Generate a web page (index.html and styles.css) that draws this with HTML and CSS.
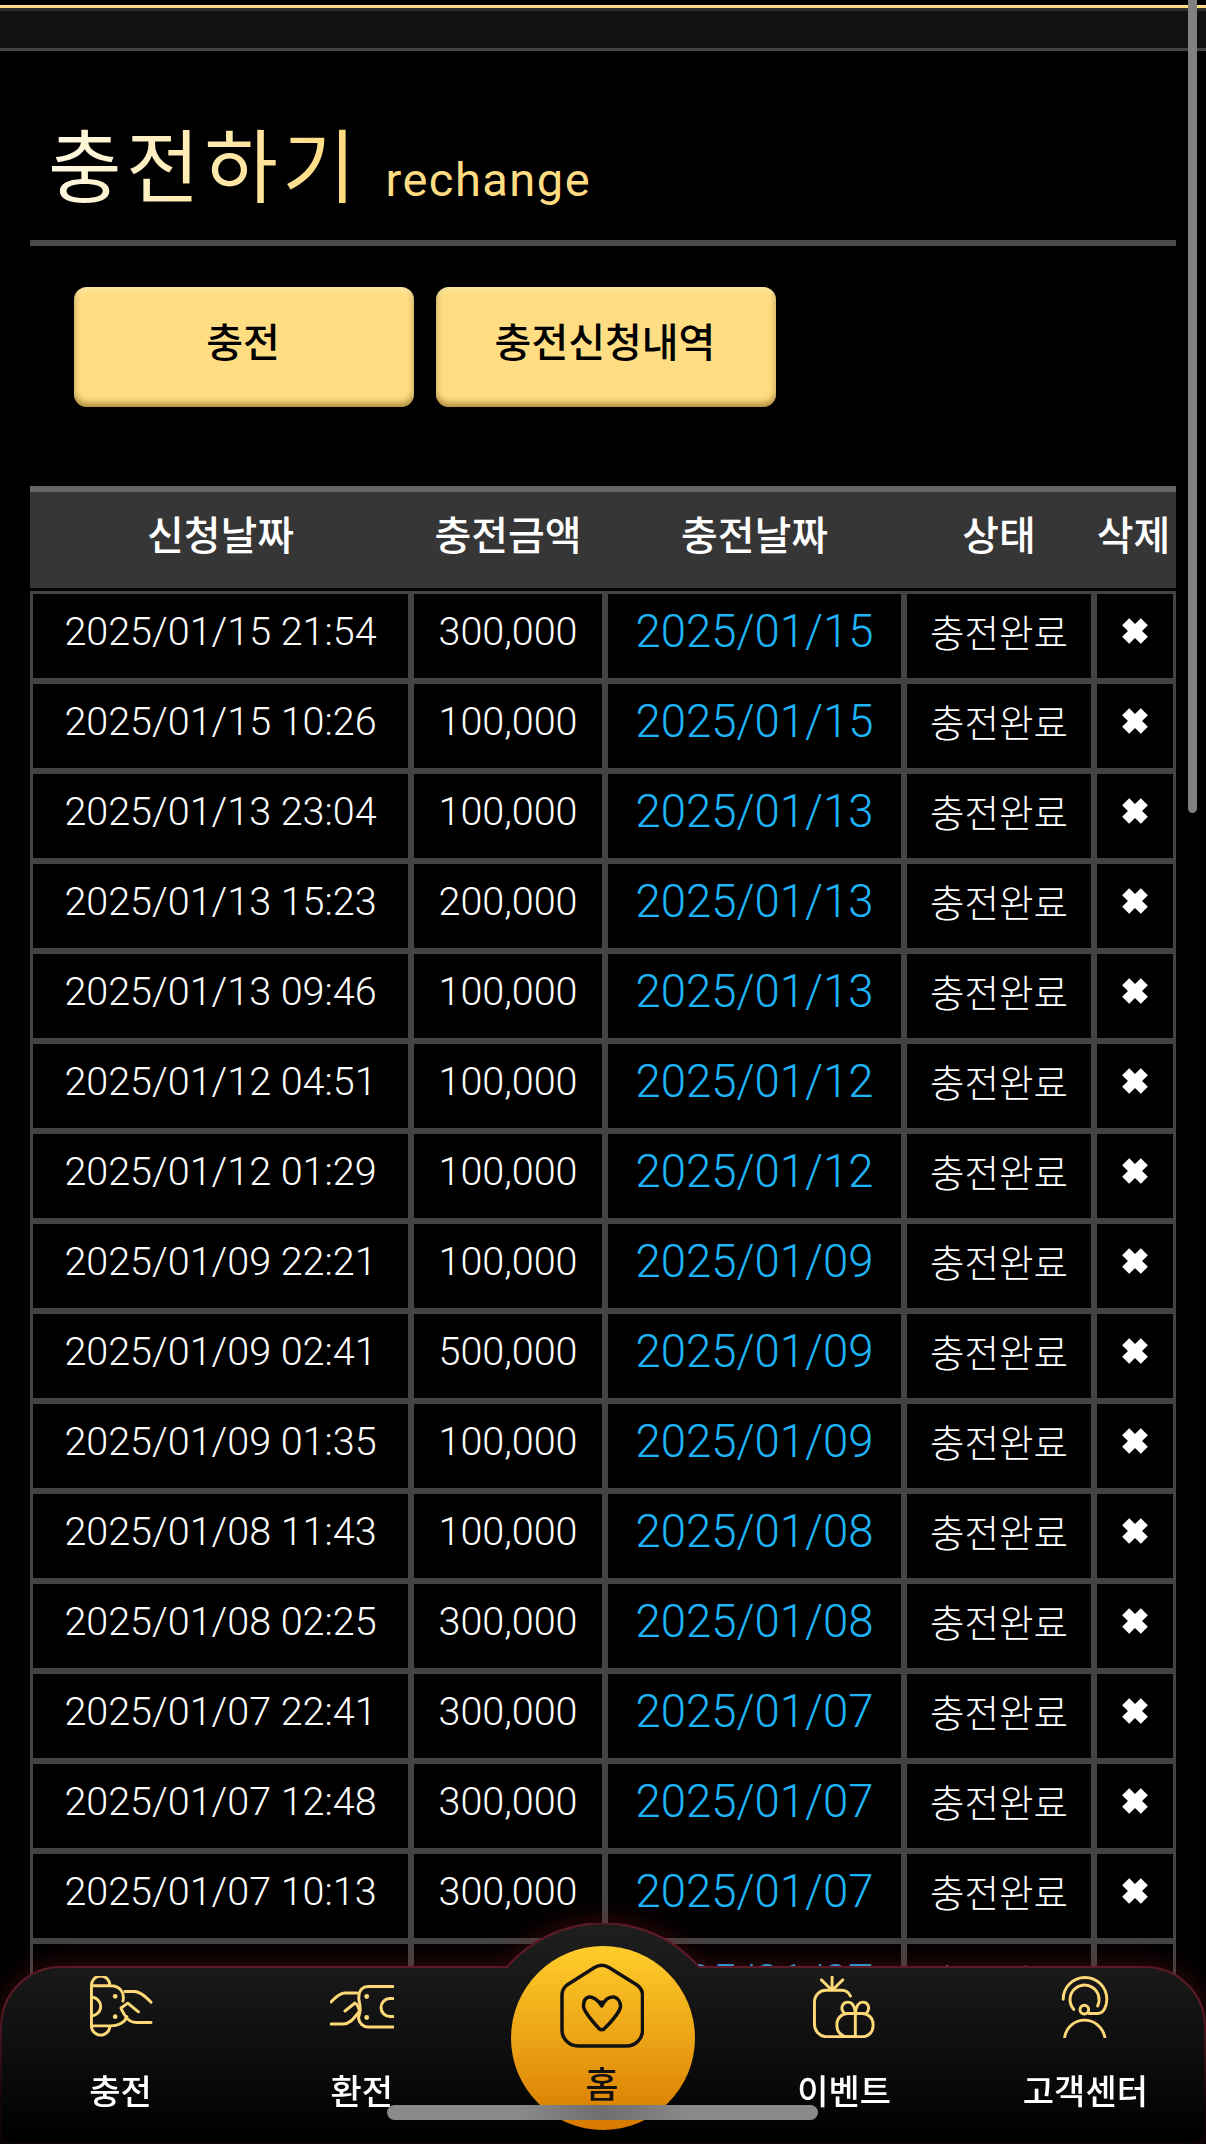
FILE: index.html
```html
<!DOCTYPE html>
<html lang="ko">
  <head>
    <meta charset="UTF-8" />
    <meta name="viewport" content="width=device-width, initial-scale=1.0" />
    <title>충전하기</title>
    <link rel="stylesheet" href="styles.css">
  </head>
  <body>
    <div class="top-bar"></div>

    <main class="content">
      <div class="page-title">
        <h1>충전하기</h1>
        <span class="page-title-en">rechange</span>
      </div>

      <div class="tabs">
        <a class="tab-button">충전</a>
        <a class="tab-button">충전신청내역</a>
      </div>

      <div class="history">
        <div class="history-head">
          <div>신청날짜</div>
          <div>충전금액</div>
          <div>충전날짜</div>
          <div>상태</div>
          <div>삭제</div>
        </div>

        <div class="history-row">
          <div class="cell">2025/01/15 21:54</div>
          <div class="cell">300,000</div>
          <div class="cell cell-date">2025/01/15</div>
          <div class="cell cell-status">충전완료</div>
          <div class="cell"><svg class="icon-x" viewBox="0 0 24 24"><path d="M5 5l14 14M19 5L5 19" /></svg></div>
        </div>
        <div class="history-row">
          <div class="cell">2025/01/15 10:26</div>
          <div class="cell">100,000</div>
          <div class="cell cell-date">2025/01/15</div>
          <div class="cell cell-status">충전완료</div>
          <div class="cell"><svg class="icon-x" viewBox="0 0 24 24"><path d="M5 5l14 14M19 5L5 19" /></svg></div>
        </div>
        <div class="history-row">
          <div class="cell">2025/01/13 23:04</div>
          <div class="cell">100,000</div>
          <div class="cell cell-date">2025/01/13</div>
          <div class="cell cell-status">충전완료</div>
          <div class="cell"><svg class="icon-x" viewBox="0 0 24 24"><path d="M5 5l14 14M19 5L5 19" /></svg></div>
        </div>
        <div class="history-row">
          <div class="cell">2025/01/13 15:23</div>
          <div class="cell">200,000</div>
          <div class="cell cell-date">2025/01/13</div>
          <div class="cell cell-status">충전완료</div>
          <div class="cell"><svg class="icon-x" viewBox="0 0 24 24"><path d="M5 5l14 14M19 5L5 19" /></svg></div>
        </div>
        <div class="history-row">
          <div class="cell">2025/01/13 09:46</div>
          <div class="cell">100,000</div>
          <div class="cell cell-date">2025/01/13</div>
          <div class="cell cell-status">충전완료</div>
          <div class="cell"><svg class="icon-x" viewBox="0 0 24 24"><path d="M5 5l14 14M19 5L5 19" /></svg></div>
        </div>
        <div class="history-row">
          <div class="cell">2025/01/12 04:51</div>
          <div class="cell">100,000</div>
          <div class="cell cell-date">2025/01/12</div>
          <div class="cell cell-status">충전완료</div>
          <div class="cell"><svg class="icon-x" viewBox="0 0 24 24"><path d="M5 5l14 14M19 5L5 19" /></svg></div>
        </div>
        <div class="history-row">
          <div class="cell">2025/01/12 01:29</div>
          <div class="cell">100,000</div>
          <div class="cell cell-date">2025/01/12</div>
          <div class="cell cell-status">충전완료</div>
          <div class="cell"><svg class="icon-x" viewBox="0 0 24 24"><path d="M5 5l14 14M19 5L5 19" /></svg></div>
        </div>
        <div class="history-row">
          <div class="cell">2025/01/09 22:21</div>
          <div class="cell">100,000</div>
          <div class="cell cell-date">2025/01/09</div>
          <div class="cell cell-status">충전완료</div>
          <div class="cell"><svg class="icon-x" viewBox="0 0 24 24"><path d="M5 5l14 14M19 5L5 19" /></svg></div>
        </div>
        <div class="history-row">
          <div class="cell">2025/01/09 02:41</div>
          <div class="cell">500,000</div>
          <div class="cell cell-date">2025/01/09</div>
          <div class="cell cell-status">충전완료</div>
          <div class="cell"><svg class="icon-x" viewBox="0 0 24 24"><path d="M5 5l14 14M19 5L5 19" /></svg></div>
        </div>
        <div class="history-row">
          <div class="cell">2025/01/09 01:35</div>
          <div class="cell">100,000</div>
          <div class="cell cell-date">2025/01/09</div>
          <div class="cell cell-status">충전완료</div>
          <div class="cell"><svg class="icon-x" viewBox="0 0 24 24"><path d="M5 5l14 14M19 5L5 19" /></svg></div>
        </div>
        <div class="history-row">
          <div class="cell">2025/01/08 11:43</div>
          <div class="cell">100,000</div>
          <div class="cell cell-date">2025/01/08</div>
          <div class="cell cell-status">충전완료</div>
          <div class="cell"><svg class="icon-x" viewBox="0 0 24 24"><path d="M5 5l14 14M19 5L5 19" /></svg></div>
        </div>
        <div class="history-row">
          <div class="cell">2025/01/08 02:25</div>
          <div class="cell">300,000</div>
          <div class="cell cell-date">2025/01/08</div>
          <div class="cell cell-status">충전완료</div>
          <div class="cell"><svg class="icon-x" viewBox="0 0 24 24"><path d="M5 5l14 14M19 5L5 19" /></svg></div>
        </div>
        <div class="history-row">
          <div class="cell">2025/01/07 22:41</div>
          <div class="cell">300,000</div>
          <div class="cell cell-date">2025/01/07</div>
          <div class="cell cell-status">충전완료</div>
          <div class="cell"><svg class="icon-x" viewBox="0 0 24 24"><path d="M5 5l14 14M19 5L5 19" /></svg></div>
        </div>
        <div class="history-row">
          <div class="cell">2025/01/07 12:48</div>
          <div class="cell">300,000</div>
          <div class="cell cell-date">2025/01/07</div>
          <div class="cell cell-status">충전완료</div>
          <div class="cell"><svg class="icon-x" viewBox="0 0 24 24"><path d="M5 5l14 14M19 5L5 19" /></svg></div>
        </div>
        <div class="history-row">
          <div class="cell">2025/01/07 10:13</div>
          <div class="cell">300,000</div>
          <div class="cell cell-date">2025/01/07</div>
          <div class="cell cell-status">충전완료</div>
          <div class="cell"><svg class="icon-x" viewBox="0 0 24 24"><path d="M5 5l14 14M19 5L5 19" /></svg></div>
        </div>
        <div class="history-row">
          <div class="cell">2025/01/07 09:55</div>
          <div class="cell">100,000</div>
          <div class="cell cell-date">2025/01/07</div>
          <div class="cell cell-status">충전완료</div>
          <div class="cell"><svg class="icon-x" viewBox="0 0 24 24"><path d="M5 5l14 14M19 5L5 19" /></svg></div>
        </div>
      </div>
    </main>

    <nav class="tabbar">
      <svg class="tabbar-shape" viewBox="0 0 1206 221">
        <defs>
          <linearGradient id="tabbar-fill" x1="0" y1="0" x2="0" y2="1">
            <stop offset="0" stop-color="#1f1f1f" />
            <stop offset="0.25" stop-color="#181818" />
            <stop offset="1" stop-color="#000" />
          </linearGradient>
          <linearGradient id="tabbar-line" x1="0" y1="0" x2="0" y2="1">
            <stop offset="0" stop-color="#5c1a26" />
            <stop offset="0.35" stop-color="#5c1a26" />
            <stop offset="0.8" stop-color="#5c1a26" stop-opacity="0" />
          </linearGradient>
        </defs>
        <path d="M1 209V104A60 60 0 0 1 61 44H507A127 127 0 0 1 699 44H1145A60 60 0 0 1 1205 104V209A12 12 0 0 1 1193 220H13A12 12 0 0 1 1 209Z" />
      </svg>

      <a class="tabbar-item">
        <svg class="tabbar-icon" width="64" height="64" viewBox="0 0 64 64">
          <path d="M1.5 10V9.5a9.5 9.5 0 0 1 19 0V10M1.5 51.5a9.5 9.5 0 0 0 19 0M1.5 10v41.5M1.5 10H21C31 10 36 17 34 26M1.5 51.5H21C29 51.5 36 48 38 42" />
          <path d="M1.5 22A9.5 9.5 0 0 1 1.5 41" />
          <path d="M36 16H46C52 16 58 22 63 27M63 48H48C43 48 39 45 37 42C35 39 33 36 32 33L39 28L50 37" />
          <circle class="dot" cx="26" cy="21" r="2.4" />
          <circle class="dot" cx="26" cy="42" r="2.4" />
        </svg>
        <span>충전</span>
      </a>

      <a class="tabbar-item">
        <svg class="tabbar-icon" width="64" height="44" viewBox="0 0 64 44">
          <path d="M63 1.5H38C33 1.5 29 5 29 11C28 14 30 18 30 22C31 26 29 29 28.5 33C29 38 33 42 38 42H63" />
          <path d="M63 13.500H60A9 9 0 0 0 60 31.500H63" />
          <path d="M1 17C5 13 9 8 15 8H27M1 39H13C20 39 24 33 29 27C30 24 27 19 25 18L15 26" />
          <circle class="dot" cx="36.700" cy="11.500" r="2.400" />
          <circle class="dot" cx="36.700" cy="32.500" r="2.400" />
        </svg>
        <span>환전</span>
      </a>

      <a class="tabbar-item tabbar-home">
        <div class="home-circle">
          <svg class="home-icon" width="84" height="85" viewBox="0 0 84 85">
            <path d="M34.500 4.500Q41.700 0 49 4.500L77 22Q82.500 26 82.500 32V66A16 16 0 0 1 66.500 83H18A16 16 0 0 1 2 67V32Q2 26 7 22Z" />
            <path d="M41.700 43C38 36 32 33.500 29 34C25 35 23.500 39 23.500 43C23.500 49 36 62 38 64.500C40 67.500 43.500 67.500 45.500 64.500C48 62 60.500 49 60.500 43C60.500 39 58 35 54 34C50 33.500 45 36 41.700 43V39" />
          </svg>
          <span>홈</span>
        </div>
      </a>

      <a class="tabbar-item">
        <svg class="tabbar-icon" width="64" height="64" viewBox="0 0 64 64">
          <path d="M19.700 1V14M8.700 4L18.700 14M30.700 4L20.700 14" />
          <path d="M38.700 20.700C37 17 34 14.700 29.700 14.700H13A12 12 0 0 0 1.500 26.500V50A13 13 0 0 0 13 62.700H45" />
          <rect x="24.700" y="38.700" width="37.300" height="24" rx="11" />
          <path d="M43.700 38.700V62.700" />
          <path d="M32.500 38.500C27 33 31 27 36 27C40 27 43 31 43.700 38.500M55 38.500C60 33 56.500 27 51.500 27C47.500 27 44.500 31 43.700 38.500" />
        </svg>
        <span>이벤트</span>
      </a>

      <a class="tabbar-item">
        <svg class="tabbar-icon" width="48" height="64" viewBox="0 0 48 64">
          <path d="M1.500 24A22.500 22.500 0 0 1 46.500 24C46.500 32 43 38.700 37 38.700H28" />
          <path d="M12.500 34.500A15 15 0 1 1 37 31" />
          <circle cx="23.300" cy="34.700" r="4.500" />
          <path d="M3 63C5 52 14 45.500 23.500 45.500C33 45.500 42 52 44.500 63" />
        </svg>
        <span>고객센터</span>
      </a>
    </nav>

    <div class="scroll-thumb-y"></div>
    <div class="scroll-thumb-x"></div>
  </body>
</html>
```

FILE: styles.css
```css
* {
  box-sizing: border-box;
}
html,
body {
  margin: 0;
  height: 2144px;
  overflow: hidden;
  background: #000;
}
body {
  font-family: Roboto, "Noto Sans CJK KR", sans-serif;
  color: #fff;
}

/* top strip */
.top-bar {
  margin-top: 5px;
  height: 46px;
  background: #111;
  border-top: 3px solid #ffdc82;
  border-bottom: 3px solid #444;
  box-shadow: inset 0 3px 0 #2c2c2c;
}

.content {
  padding: 0 30px;
}

/* title */
.page-title {
  display: flex;
  align-items: baseline;
  gap: 25px;
  height: 195px;
  padding: 55px 0 0 18px;
  border-bottom: 6px solid #4a4a4a;
}
.page-title h1 {
  margin: 0;
  font-size: 80px;
  font-weight: 400;
  letter-spacing: 4.5px;
  line-height: 110px;
  font-family: "Noto Sans CJK KR", sans-serif;
  background: linear-gradient(100deg, #fffbe8, #ffd877);
  -webkit-background-clip: text;
  background-clip: text;
  color: transparent;
}
.page-title-en {
  font-size: 47px;
  color: #ffdc82;
  letter-spacing: 1.5px;
}

/* buttons */
.tabs {
  display: flex;
  gap: 22px;
  padding-left: 44px;
  margin-top: 41px;
}
.tab-button {
  display: flex;
  align-items: center;
  justify-content: center;
  width: 340px;
  height: 120px;
  padding: 0 2px 14px 0;
  border-radius: 13px;
  background: #ffdd82;
  color: #000;
  font-family: "Noto Sans CJK KR", sans-serif;
  font-size: 40px;
  font-weight: 500;
  box-shadow: inset 0 -4px 6px rgba(110, 75, 0, 0.55), inset 0 3px 4px rgba(255, 245, 200, 0.6);
}

/* table */
.history {
  width: 1146px;
  margin-top: 79px;
}
.history-head,
.history-row {
  display: grid;
  grid-template-columns: 381px 194px 299px 190px 82px;
}
.history-head {
  height: 102px;
  margin-bottom: 3px;
  padding-bottom: 14px;
  align-items: center;
  text-align: center;
  background: #363636;
  border-top: 6px solid #666;
  font-family: "Noto Sans CJK KR", sans-serif;
  font-size: 40px;
  font-weight: 500;
}
.history-head div:last-child {
  padding-right: 3px;
}
.cell {
  display: flex;
  align-items: center;
  justify-content: center;
  height: 90px;
  padding-bottom: 10px;
  border: 3px solid #444;
  font-size: 39.500px;
  font-weight: 300;
}
.cell-date {
  font-size: 45.500px;
  color: #1fb4f7;
}
.cell-status {
  font-family: "Noto Sans CJK KR", sans-serif;
  font-size: 37.500px;
  font-weight: 300;
  padding-bottom: 12px;
}
.icon-x {
  width: 32px;
  height: 32px;
  fill: none;
  stroke: #fff;
  stroke-width: 7.500;
}

/* bottom menu */
.tabbar {
  position: fixed;
  left: 0;
  right: 0;
  bottom: 0;
  height: 221px;
  display: grid;
  grid-template-columns: repeat(5, 1fr);
}
.tabbar-shape {
  position: absolute;
  left: 0;
  top: 0;
  width: 1206px;
  height: 221px;
  filter: drop-shadow(0 -2px 12px rgba(130, 20, 30, 0.4));
}
.tabbar-shape path {
  fill: url(#tabbar-fill);
  stroke: url(#tabbar-line);
  stroke-width: 2;
}
.tabbar-item {
  position: relative;
  display: flex;
  flex-direction: column;
  align-items: center;
  padding-top: 53px;
  font-family: "Noto Sans CJK KR", sans-serif;
  font-size: 34px;
  font-weight: 500;
}
.tabbar-item span {
  margin-top: 27px;
  line-height: 50px;
}
.tabbar-icon {
  height: 62px;
  fill: none;
  stroke: #ffd877;
  stroke-width: 3;
  stroke-linecap: round;
  stroke-linejoin: round;
}
.tabbar-icon .dot {
  fill: #ffd877;
  stroke: none;
}
.tabbar-home {
  padding-top: 23px;
}
.home-circle {
  display: flex;
  flex-direction: column;
  align-items: center;
  width: 184px;
  height: 184px;
  padding: 17px 2px 0 0;
  border-radius: 50%;
  background: linear-gradient(#ffcd2b, #d87a00);
  color: #111;
}
.home-circle span {
  margin-top: 10px;
  font-size: 36px;
  line-height: 48px;
}
.home-icon {
  fill: none;
  stroke: #111;
  stroke-width: 3.500;
  stroke-linecap: round;
  stroke-linejoin: round;
}

/* overlay scrollbars */
.scroll-thumb-y {
  position: fixed;
  top: 0;
  left: 1188px;
  width: 9px;
  height: 813px;
  border-radius: 0 0 5px 5px;
  background: #808080;
}
.scroll-thumb-x {
  position: fixed;
  left: 387px;
  top: 2105px;
  width: 431px;
  height: 15px;
  border-radius: 8px;
  background: linear-gradient(90deg, #8a8a8a 30%, #6e6e6e 50%, #8a8a8a 70%);
}
```
